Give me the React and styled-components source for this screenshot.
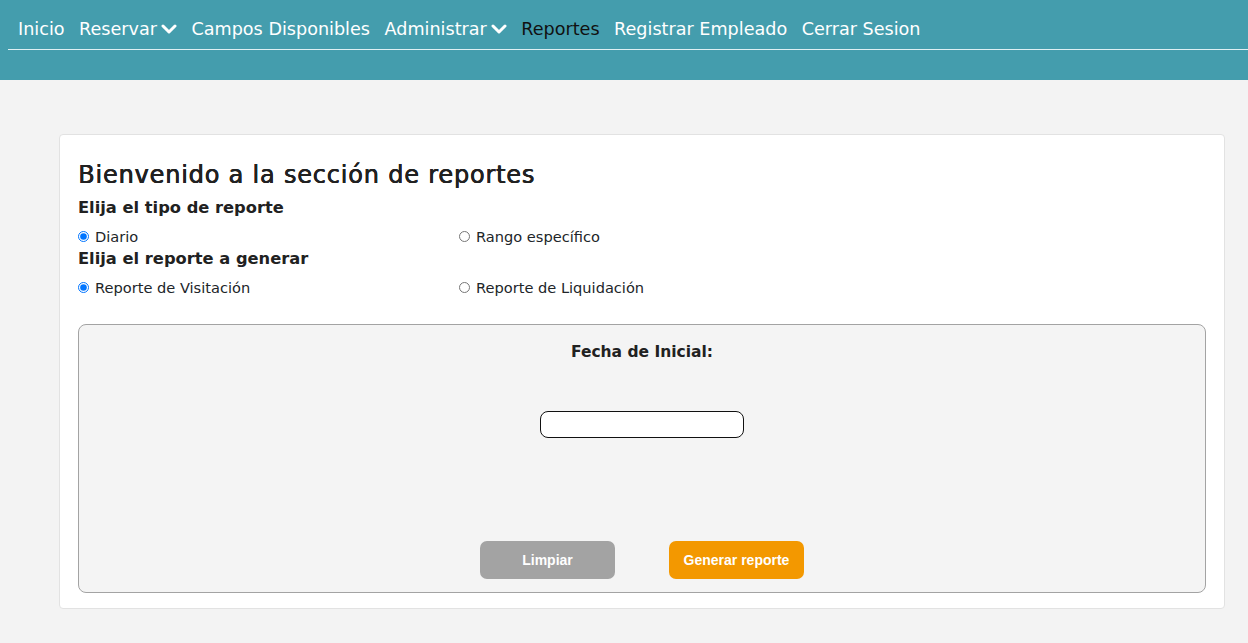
import React, { useState } from "react"
import styled, { createGlobalStyle } from "styled-components"

const GlobalStyle = createGlobalStyle`
  body {
    margin: 0;
    background: #f3f3f3;
    font-family: "DejaVu Sans", Verdana, sans-serif;
    color: #212529;
  }
`

const NavBar = styled.header`
  background: #449dad;
  height: 80px;
  padding-left: 8px;
`

const NavList = styled.nav`
  display: flex;
  align-items: center;
  height: 49px;
  padding-left: 10px;
  gap: 14.5px;
  border-bottom: 1px solid #dff0f3;
  font-size: 17.6px;
`

const NavItem = styled.a`
  color: ${props => (props.active ? "#111" : "#fff")};
  text-decoration: none;
  display: flex;
  align-items: center;
  gap: 4px;
  padding-top: 9px;
`

const Main = styled.main`
  padding: 54px 23px 34px 59px;
`

const Card = styled.section`
  background: #fff;
  border: 1px solid #e2e2e2;
  border-radius: 4px;
  padding: 23px 18px 15px 18px;
`

const Title = styled.h1`
  margin: 0;
  font-size: 24px;
  font-weight: normal;
  letter-spacing: 0.8px;
  text-shadow: 0.6px 0 0 #212121, 0.3px 0 0 #212121;
  line-height: 34px;
  color: #212121;
`

const SubTitle = styled.h2`
  margin: ${props => props.first ? "5px" : "0"} 0 0 0;
  font-size: 16.3px;
  font-weight: bold;
  line-height: 22px;
  color: #212121;
`

const RadioRow = styled.div`
  display: grid;
  grid-template-columns: 381px 1fr;
  height: 24px;
  margin-top: 5px;
  align-items: center;
  font-size: 14.6px;
`

const RadioLabel = styled.label`
  display: flex;
  align-items: center;
  gap: 6px;
  input {
    margin: 0;
    width: 11px;
    height: 11px;
  }
`

const Panel = styled.div`
  margin-top: 25px;
  background: #f4f4f4;
  border: 1px solid #a3a3a3;
  border-radius: 8px;
  height: 269px;
  display: flex;
  flex-direction: column;
  align-items: center;
  padding-top: 18px;
  box-sizing: border-box;
`

const FieldLabel = styled.div`
  font-size: 15.5px;
  font-weight: bold;
  color: #212121;
`

const DateInput = styled.input`
  margin-top: 50px;
  width: 204px;
  height: 27px;
  box-sizing: border-box;
  border: 1px solid #111;
  border-radius: 8px;
  background: #fff;
`

const Actions = styled.div`
  margin-top: auto;
  margin-bottom: 13px;
  display: flex;
  gap: 54px;
`

const Button = styled.button`
  width: 135px;
  height: 38px;
  border: none;
  border-radius: 7px;
  background: ${props => props.bg};
  color: #fff;
  font-family: "Liberation Sans", Arial, sans-serif;
  font-weight: bold;
  font-size: 14px;
`

const Chevron = () => (
  <svg width="16" height="12" viewBox="0 0 16 12">
    <path d="M2 3 L8 9 L14 3" fill="none" stroke="#fff" strokeWidth="3" strokeLinecap="round" strokeLinejoin="round" />
  </svg>
)

const App = () => {
  const [tipo, setTipo] = useState("diario")
  const [reporte, setReporte] = useState("visitacion")

  return (
    <>
      <GlobalStyle />
      <NavBar>
        <NavList>
          <NavItem href="#">Inicio</NavItem>
          <NavItem href="#">Reservar <Chevron /></NavItem>
          <NavItem href="#">Campos Disponibles</NavItem>
          <NavItem href="#">Administrar <Chevron /></NavItem>
          <NavItem href="#" active>Reportes</NavItem>
          <NavItem href="#">Registrar Empleado</NavItem>
          <NavItem href="#">Cerrar Sesion</NavItem>
        </NavList>
      </NavBar>
      <Main>
        <Card>
          <Title>Bienvenido a la sección de reportes</Title>
          <SubTitle first>Elija el tipo de reporte</SubTitle>
          <RadioRow>
            <RadioLabel>
              <input type="radio" checked={tipo === "diario"} onChange={() => setTipo("diario")} />
              Diario
            </RadioLabel>
            <RadioLabel>
              <input type="radio" checked={tipo === "rango"} onChange={() => setTipo("rango")} />
              Rango específico
            </RadioLabel>
          </RadioRow>
          <SubTitle>Elija el reporte a generar</SubTitle>
          <RadioRow>
            <RadioLabel>
              <input type="radio" checked={reporte === "visitacion"} onChange={() => setReporte("visitacion")} />
              Reporte de Visitación
            </RadioLabel>
            <RadioLabel>
              <input type="radio" checked={reporte === "liquidacion"} onChange={() => setReporte("liquidacion")} />
              Reporte de Liquidación
            </RadioLabel>
          </RadioRow>
          <Panel>
            <FieldLabel>Fecha de Inicial:</FieldLabel>
            <DateInput type="text" />
            <Actions>
              <Button bg="#a3a3a3">Limpiar</Button>
              <Button bg="#f39800">Generar reporte</Button>
            </Actions>
          </Panel>
        </Card>
      </Main>
    </>
  )
}

export default App
